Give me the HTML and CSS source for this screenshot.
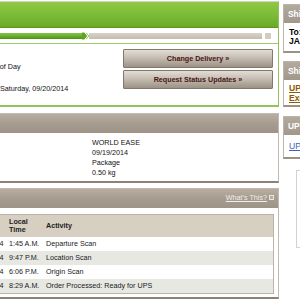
FILE: index.html
```html
<!DOCTYPE html>
<html>
<head>
<meta charset="utf-8">
<link rel="stylesheet" href="styles.css">
</head>
<body>
<div class="page">
  <main class="main">
    <section class="track">
      <div class="track-head"></div>
      <div class="progress">
        <div class="prog-done"></div>
        <svg class="chev" width="7" height="8" viewBox="0 0 7 8"><path d="M0 0.5 H2.5 L5.5 4 L2.5 7.5 H0 Z" fill="#5fa424"/><path d="M2.6 0.3 L5.8 4 L2.6 7.7" fill="none" stroke="#fff" stroke-width="1"/><path d="M4.2 0.8 L6.8 4 L4.2 7.2" fill="none" stroke="#8cc653" stroke-width="1"/></svg>
        <div class="prog-todo"></div>
        <div class="prog-end"></div>
      </div>
      <div class="track-body">
        <div class="deliv">
          <p class="deliv-day">End of Day</p>
          <p class="deliv-date">Saturday, 09/20/2014</p>
        </div>
        <div class="actions">
          <button class="btn">Change Delivery »</button>
          <button class="btn">Request Status Updates »</button>
        </div>
      </div>
    </section>

    <section class="panel details">
      <div class="panel-head"></div>
      <div class="details-body">
        <p>WORLD EASE</p>
        <p>09/19/2014</p>
        <p>Package</p>
        <p>0.50 kg</p>
      </div>
    </section>

    <section class="panel history">
      <div class="panel-head history-head">
        <a class="whats" href="#">What's This?</a>
        <span class="help-ico"></span>
      </div>
      <div class="history-body">
        <div class="scans">
          <div class="th c-date-h">Date</div>
          <div class="th c-time">Local<br>Time</div>
          <div class="th c-act">Activity</div>

          <div class="td c-date">09/21/2014</div>
          <div class="td c-time">1:45 A.M.</div>
          <div class="td c-act">Departure Scan</div>

          <div class="td c-date alt">09/20/2014</div>
          <div class="td c-time alt">9:47 P.M.</div>
          <div class="td c-act alt">Location Scan</div>

          <div class="td c-date">09/20/2014</div>
          <div class="td c-time">6:06 P.M.</div>
          <div class="td c-act">Origin Scan</div>

          <div class="td c-date alt">09/19/2014</div>
          <div class="td c-time alt">8:29 A.M.</div>
          <div class="td c-act alt">Order Processed: Ready for UPS</div>
        </div>
      </div>
    </section>
  </main>

  <aside class="side">
    <div class="box box-ship">
      <div class="box-head">Shipment Progress</div>
      <div class="box-body ship-body">
        <p>To:</p>
        <p>JAPAN</p>
      </div>
    </div>
    <div class="box box-opts">
      <div class="box-head">Shipping Options</div>
      <div class="box-body opts-body">
        <a href="#">UPS My Choice</a><br>
        <a href="#">Exclusive</a>
      </div>
    </div>
    <div class="box box-ups">
      <div class="box-head">UPS</div>
      <div class="box-body ups-body">
        <a href="#">UPS Help</a>
      </div>
    </div>
    <div class="promo"></div>
  </aside>
</div>
</body>
</html>
```

FILE: styles.css
```css
* { box-sizing: border-box; margin: 0; padding: 0; }

html, body {
  width: 300px;
  height: 300px;
  overflow: hidden;
  background: #fff;
}

body {
  font-family: "Liberation Sans", Arial, sans-serif;
  font-size: 7.2px;
  line-height: 10px;
  color: #111;
}

.page {
  display: flex;
  align-items: flex-start;
  gap: 4px;
  width: 500px;
  padding-top: 1px;
  margin-left: -100px;
}

.main {
  flex: 0 0 379px;
  display: flex;
  flex-direction: column;
}

/* ---------- tracking panel ---------- */
.track {
  border: solid #93c35c;
  border-width: 1px 1px 2px 0;
  border-top-color: #cfd5c8;
}

.track-head {
  height: 26px;
  background: linear-gradient(#90c945, #79b935 60%, #6aa92a);
  border-bottom: 1px solid #5c961f;
}

.progress {
  display: flex;
  align-items: center;
  height: 6px;
  margin: 5px 7px 4px 0;
}

.prog-done {
  flex: 0 0 182px;
  height: 6px;
  background: linear-gradient(#86c448, #5fa524 70%, #4f8e1a);
}

.chev {
  flex: 0 0 7px;
}

.prog-todo {
  flex: 1;
  height: 6px;
  background: linear-gradient(#d9d2c8, #c5bcb0);
}

.prog-end {
  flex: 0 0 6px;
  height: 6px;
  margin-left: 3px;
  background: #d3ccc3;
}

.track-body {
  display: flex;
  border-top: 1px solid #9ccb68;
  padding: 5px 5px 11px 0;
}

.deliv {
  flex: 1;
  padding: 13px 0 0 85px;
}

.deliv-date {
  margin-top: 12px;
  padding-left: 15px;
}

.actions {
  flex: 0 0 150px;
  display: flex;
  flex-direction: column;
  gap: 2px;
}

.btn {
  height: 19px;
  font-family: inherit;
  font-size: 7.2px;
  font-weight: bold;
  color: #4b1414;
  border: 1px solid #82786c;
  border-radius: 1px;
  background: linear-gradient(#e2ddd6, #c6beb3 45%, #9c9285);
}

/* ---------- generic brown panels ---------- */
.panel {
  border: solid #c2bab0;
  border-width: 1px 1px 2px 0;
  border-bottom-color: #8c8276;
}

.panel-head {
  height: 19px;
  background: linear-gradient(#b7ada0, #a69c8f 50%, #9d9386);
}

.details {
  margin-top: 6px;
}

.details-body {
  height: 48px;
  padding: 5px 0 3px 192px;
}

.history {
  margin-top: 5px;
}

.history-head {
  display: flex;
  justify-content: flex-end;
  align-items: center;
  gap: 2px;
  padding: 0 4px 2px 0;
}

.whats {
  color: #f1eee9;
  font-size: 7.2px;
  text-decoration: underline;
}

.help-ico {
  width: 5px;
  height: 5px;
  border: 1px solid #e9e4dd;
  background: #b7ada0;
}

.history-body {
  padding: 6px 4px 3px 0;
}

.scans {
  display: grid;
  grid-template-columns: 105px 40px 1fr;
  grid-template-rows: 22px repeat(4, 14px);
  border: 1px solid #bcb3a7;
}

.th {
  background: #d8cfc3;
  font-weight: bold;
  line-height: 8px;
  display: flex;
  align-items: center;
  color: #222;
}

.c-date-h {
  padding-left: 40px;
}

.td {
  display: flex;
  align-items: center;
  white-space: nowrap;
  color: #1a1a1a;
}

.alt {
  background: #e8e8e3;
}

.c-date {
  justify-content: flex-end;
  padding-right: 2.5px;
}

.c-time {
  padding-left: 3px;
}

/* ---------- sidebar ---------- */
.side {
  flex: 0 0 110px;
  display: flex;
  flex-direction: column;
  padding-top: 3px;
}

.box {
  border: 1px solid #bcb4a9;
  border-bottom-width: 2px;
  border-bottom-color: #9b9185;
}

.box-head {
  height: 18px;
  line-height: 18px;
  padding-left: 4px;
  color: #fff;
  font-weight: bold;
  font-size: 8.4px;
  white-space: nowrap;
  background: linear-gradient(#b3a99c, #a1978a);
}

.box-body {
  padding-left: 5px;
  white-space: nowrap;
  font-size: 8.6px;
}

.ship-body {
  height: 28px;
  padding-top: 5px;
  font-weight: bold;
  line-height: 8.5px;
  color: #000;
}

.box-opts {
  margin-top: 8px;
}

.opts-body {
  height: 25px;
  padding-top: 3px;
  line-height: 10px;
}

.opts-body a {
  color: #8a5a06;
  font-weight: bold;
}

.box-ups {
  margin-top: 9px;
}

.ups-body {
  height: 22px;
  padding-top: 6px;
}

.ups-body a {
  color: #3d5fb8;
}

.promo {
  margin: 11px 0 0 13px;
  height: 78px;
  border: 1px solid #d2d2d2;
}
```
